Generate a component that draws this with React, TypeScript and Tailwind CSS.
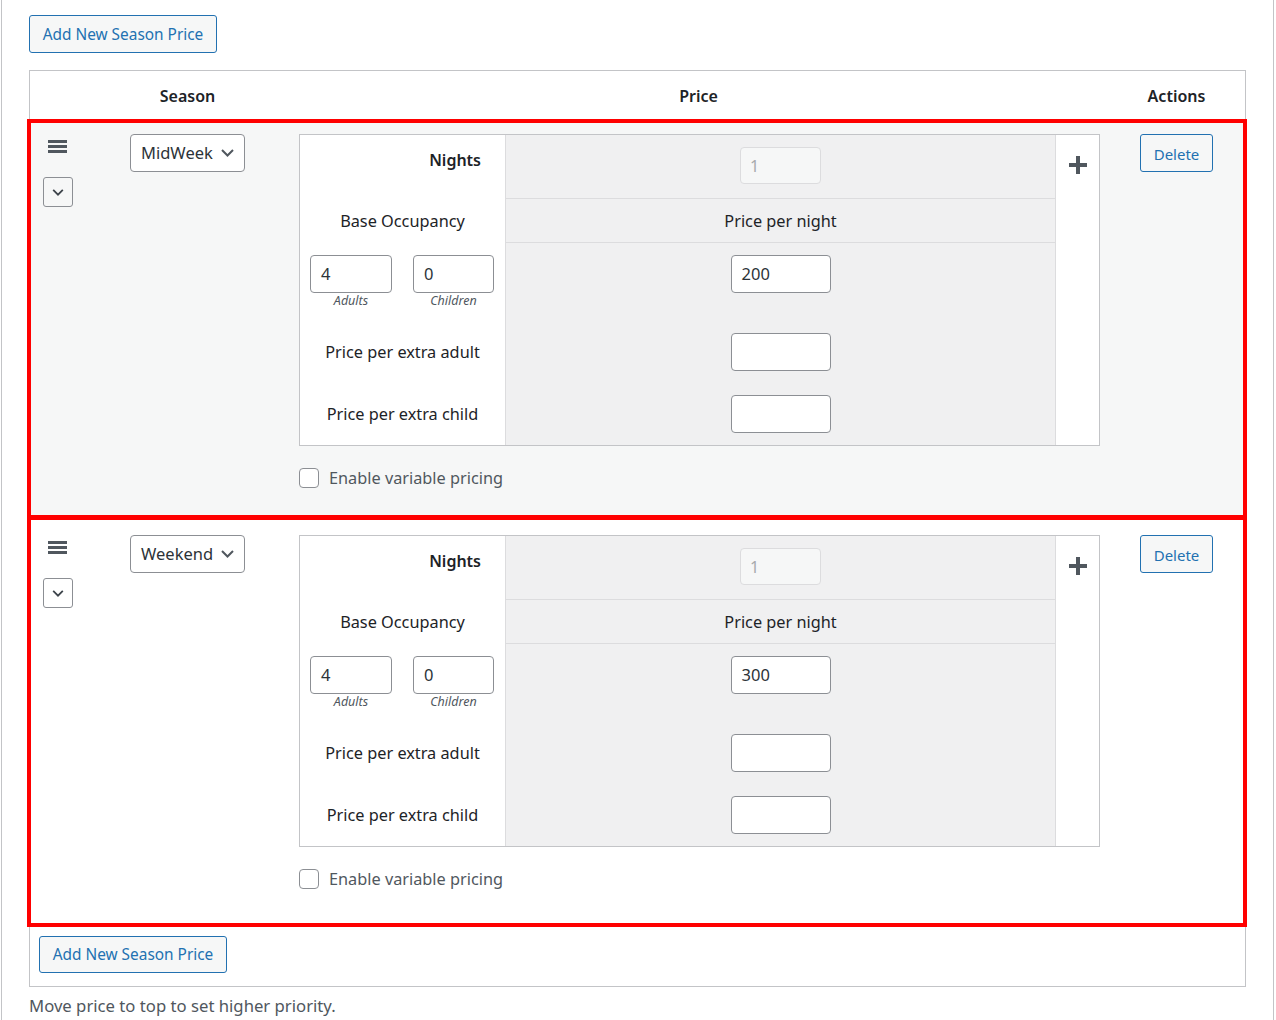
import React from "react";

const FONT = "font-['Noto_Sans',sans-serif]";

function Hamburger() {
  return (
    <svg width="19" height="13" viewBox="0 0 19 13" className="block">
      <rect x="0" y="0" width="19" height="3" fill="#50575e" />
      <rect x="0" y="5" width="19" height="3" fill="#50575e" />
      <rect x="0" y="10" width="19" height="3" fill="#50575e" />
    </svg>
  );
}

function Chevron({ w = 13, color = "#50575e", sw = 2 }: { w?: number; color?: string; sw?: number }) {
  return (
    <svg width={w} height={Math.round(w * 0.6)} viewBox="0 0 13 8" className="block">
      <polyline points="1,1 6.5,6.5 12,1" fill="none" stroke={color} strokeWidth={sw} />
    </svg>
  );
}

function Plus() {
  return (
    <svg width="18" height="18" viewBox="0 0 18 18" className="block">
      <rect x="7" y="0" width="4" height="18" fill="#50575e" />
      <rect x="0" y="7" width="18" height="4" fill="#50575e" />
    </svg>
  );
}

function TextBox({ value, w }: { value: string; w: string }) {
  return (
    <div
      className={`${w} h-[38px] rounded-[4px] border border-[#8c8f94] bg-white px-[10px] flex items-center text-[16.5px] leading-[20px] text-[#2c3338]`}
    >
      {value}
    </div>
  );
}

function PriceTable({ price }: { price: string }) {
  return (
    <div className="ml-[10px] w-[801px] h-[312px] border border-[#c3c4c7] bg-white flex">
      <div className="w-[205px] flex flex-col text-[16.3px] leading-[22px] text-[#1d2327]">
        <div className="h-[64px] pt-[14px] pr-[24px] text-right text-[16px] font-semibold leading-[22px]">Nights</div>
        <div className="h-[44px] flex items-center justify-center">Base Occupancy</div>
        <div className="h-[77px] pt-[12px] pl-[10px] flex gap-[21px]">
          <div className="flex flex-col items-center w-[82px]">
            <TextBox value="4" w="w-[82px]" />
            <div className="text-[12.5px] italic text-[#50575e] leading-[16px]">Adults</div>
          </div>
          <div className="flex flex-col items-center w-[81px]">
            <TextBox value="0" w="w-[81px]" />
            <div className="text-[12.5px] italic text-[#50575e] leading-[16px]">Children</div>
          </div>
        </div>
        <div className="h-[63px] flex items-center justify-center">Price per extra adult</div>
        <div className="h-[62px] flex items-center justify-center">Price per extra child</div>
      </div>
      <div className="w-[551px] bg-[#f0f0f1] border-x border-[#dcdcde] flex flex-col text-[16.3px] leading-[22px] text-[#1d2327]">
        <div className="h-[64px] border-b border-[#dcdcde] flex justify-center pt-[12px]">
          <div className="w-[81px] h-[37px] rounded-[4px] border border-[#dcdcde] bg-[#f6f7f7] px-[9px] flex items-center text-[16px] text-[#a7aaad]">
            1
          </div>
        </div>
        <div className="h-[44px] border-b border-[#dcdcde] flex items-center justify-center">Price per night</div>
        <div className="h-[77px] pt-[12px] flex justify-center">
          <TextBox value={price} w="w-[100px]" />
        </div>
        <div className="h-[63px] flex items-center justify-center">
          <TextBox value="" w="w-[100px]" />
        </div>
        <div className="h-[62px] flex items-center justify-center">
          <TextBox value="" w="w-[100px]" />
        </div>
      </div>
      <div className="flex-1 flex justify-center pt-[21px]">
        <Plus />
      </div>
    </div>
  );
}

function SeasonRow({
  name,
  price,
  bg,
  pt,
  pb,
  extraClass,
}: {
  name: string;
  price: string;
  bg: string;
  pt: string;
  pb: string;
  extraClass: string;
}) {
  return (
    <div className={`-ml-[3px] -mr-[2px] border-[4px] border-[#ff0000] ${bg} ${pt} ${pb} ${extraClass} flex items-start relative`}>
      <div className="w-[55px] flex flex-col">
        <div className="ml-[17px] mt-[6px]">
          <Hamburger />
        </div>
        <div className="ml-[12px] mt-[24px] w-[30px] h-[30px] rounded-[3px] border border-[#8c8f94] flex items-center justify-center">
          <Chevron w={12} color="#3c434a" sw={2} />
        </div>
      </div>
      <div className="w-[203px]">
        <div className="ml-[44px] w-[115px] h-[38px] rounded-[4px] border border-[#8c8f94] bg-white pl-[10px] pr-[10px] flex items-center justify-between text-[16.5px] leading-[20px] text-[#2c3338]">
          <span>{name}</span>
          <Chevron w={13} color="#50575e" sw={2} />
        </div>
      </div>
      <div className="w-[819px]">
        <PriceTable price={price} />
        <div className="ml-[10px] mt-[22px] h-[20px] flex items-center gap-[10px]">
          <div className="w-[20px] h-[20px] rounded-[4px] border border-[#8c8f94] bg-white shrink-0" />
          <span className="text-[16.3px] leading-[20px] text-[#50575e]">Enable variable pricing</span>
        </div>
      </div>
      <div className="flex-1">
        <button className="ml-[32px] h-[38px] w-[73px] rounded-[3px] border border-[#2271b1] bg-[#f6f7f7] pt-[1px] text-[15px] leading-[20px] text-[#2271b1]">
          Delete
        </button>
      </div>
    </div>
  );
}

export default function App() {
  return (
    <div className={`${FONT} bg-white w-[1276px] h-[1020px] overflow-hidden`}>
      <div className="ml-[1px] w-[1273px] h-[1020px] border-x border-[#c3c4c7] pl-[27px] pt-[15px]">
        <button className="h-[38px] w-[188px] rounded-[3px] border border-[#2271b1] bg-[#f6f7f7] pt-[2px] text-[15.4px] leading-[20px] text-[#2271b1]">
          Add New Season Price
        </button>
        <div className="mt-[17px] w-[1217px] border border-[#c3c4c7] bg-white">
          <div className="h-[48px] grid grid-cols-[56px_203px_819px_137px] items-center pt-[2px] text-[16px] leading-[22px] font-semibold text-[#1d2327]">
            <div />
            <div className="text-center">Season</div>
            <div className="text-center">Price</div>
            <div className="text-center">Actions</div>
          </div>
          <SeasonRow name="MidWeek" price="200" bg="bg-[#f6f7f7]" pt="pt-[11px]" pb="pb-[27px]" extraClass="" />
          <SeasonRow name="Weekend" price="300" bg="bg-white" pt="pt-[15px]" pb="pb-[34px]" extraClass="-mt-[3px]" />
          <div className="pl-[9px] pt-[9px] pb-[13px]">
            <button className="h-[37px] w-[188px] rounded-[3px] border border-[#2271b1] bg-[#f6f7f7] pt-[1px] text-[15.4px] leading-[20px] text-[#2271b1]">
              Add New Season Price
            </button>
          </div>
        </div>
        <div className="mt-[7px] text-[16.7px] text-[#50575e] leading-[24px]">Move price to top to set higher priority.</div>
      </div>
    </div>
  );
}
